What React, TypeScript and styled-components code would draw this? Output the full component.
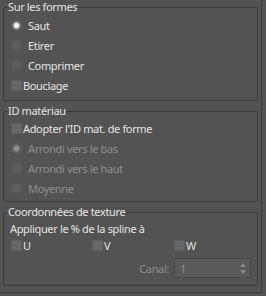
import React from 'react';
import styled, { createGlobalStyle } from 'styled-components';

const GlobalStyle = createGlobalStyle`
  html, body {
    margin: 0;
    padding: 0;
    background: #535353;
  }
  body {
    font-family: 'Noto Sans', 'Open Sans', sans-serif;
    font-size: 11px;
    letter-spacing: -0.35px;
    color: #e4e4e4;
  }
`;

const Page = styled.div`
  width: 266px;
  height: 296px;
  background: #535353;
  overflow: hidden;
`;

const Rollout = styled.div`
  width: 262px;
  height: 293px;
  box-sizing: border-box;
  padding: 0 3px;
  border-right: 1px solid #3c3c3c;
  border-bottom: 1px solid #3c3c3c;
  display: flex;
  flex-direction: column;
  gap: 3px;
`;

const Group = styled.fieldset<{ $pb: number }>`
  margin: 0;
  padding: 0 0 ${p => p.$pb}px 0;
  border: 1px solid #3a3a3a;
  border-radius: 2px;
  min-width: 0;
`;

const Legend = styled.legend`
  margin-left: 3px;
  padding: 0 1px;
  height: 14px;
  line-height: 14px;
  color: #e4e4e4;
`;

const Body = styled.div<{ $pt?: number }>`
  padding: ${p => p.$pt ?? 0}px 6px 0 7px;
  display: flex;
  flex-direction: column;
`;

const Row = styled.label<{ $h?: number; $disabled?: boolean }>`
  display: flex;
  align-items: center;
  height: ${p => p.$h ?? 20}px;
  color: ${p => (p.$disabled ? '#8e8e8e' : '#e4e4e4')};
  white-space: nowrap;
`;

const Caption = styled(Row)`
  margin-left: -1px;
`;

const RadioDot = styled.span<{ $checked?: boolean; $disabled?: boolean }>`
  width: 11px;
  height: 11px;
  border-radius: 50%;
  margin-right: 6px;
  box-sizing: border-box;
  background: ${p =>
    p.$checked
      ? `radial-gradient(circle, ${p.$disabled ? '#8f8f8f' : '#f4f4f4'} 0 2.2px, ${p.$disabled ? '#686868' : '#8a8a8a'} 3.2px, #626262 5.5px)`
      : '#5d5d5d'};
  box-shadow: inset 0 0 0 1px #595959;
  flex: none;
`;

const Check = styled.span`
  width: 11px;
  height: 11px;
  box-sizing: border-box;
  background: #676767;
  border: 1px solid #5e5e5e;
  margin-right: 1px;
  flex: none;
`;

const CheckGrid = styled.div`
  display: grid;
  grid-template-columns: 81px 82px 1fr;
`;

const CanalRow = styled.div`
  display: flex;
  align-items: center;
  justify-content: flex-end;
  gap: 5px;
  height: 20px;
  margin-top: 5px;
  color: #8e8e8e;
`;

const Spinner = styled.div`
  width: 77px;
  height: 20px;
  box-sizing: border-box;
  background: #595959;
  border: 1px solid #484848;
  display: flex;
  align-items: center;
  justify-content: space-between;
  padding: 0 4px 0 5px;
  color: #8e8e8e;
`;

const Arrows = styled.svg`
  width: 6px;
  height: 11px;
`;

export default function App() {
  return (
    <Page>
      <GlobalStyle />
      <Rollout>
        <Group $pb={5}>
          <Legend>Sur les formes</Legend>
          <Body $pt={1}>
            <Row><RadioDot $checked />Saut</Row>
            <Row><RadioDot />Etirer</Row>
            <Row><RadioDot />Comprimer</Row>
            <Row><Check />Bouclage</Row>
          </Body>
        </Group>

        <Group $pb={3}>
          <Legend>ID matériau</Legend>
          <Body>
            <Row><Check />Adopter l'ID mat. de forme</Row>
            <Row $disabled><RadioDot $checked $disabled />Arrondi vers le bas</Row>
            <Row $disabled><RadioDot $disabled />Arrondi vers le haut</Row>
            <Row $disabled><RadioDot $disabled />Moyenne</Row>
          </Body>
        </Group>

        <Group $pb={7}>
          <Legend>Coordonnées de texture</Legend>
          <Body>
            <Caption $h={18}>Appliquer le % de la spline à</Caption>
            <CheckGrid>
              <Row $h={16}><Check />U</Row>
              <Row $h={16}><Check />V</Row>
              <Row $h={16}><Check />W</Row>
            </CheckGrid>
            <CanalRow>
              Canal:
              <Spinner>
                1
                <Arrows viewBox="0 0 6 11">
                  <path d="M3 0 L6 4 L0 4 Z M0 7 L6 7 L3 11 Z" fill="#8a8a8a" />
                </Arrows>
              </Spinner>
            </CanalRow>
          </Body>
        </Group>
      </Rollout>
    </Page>
  );
}
